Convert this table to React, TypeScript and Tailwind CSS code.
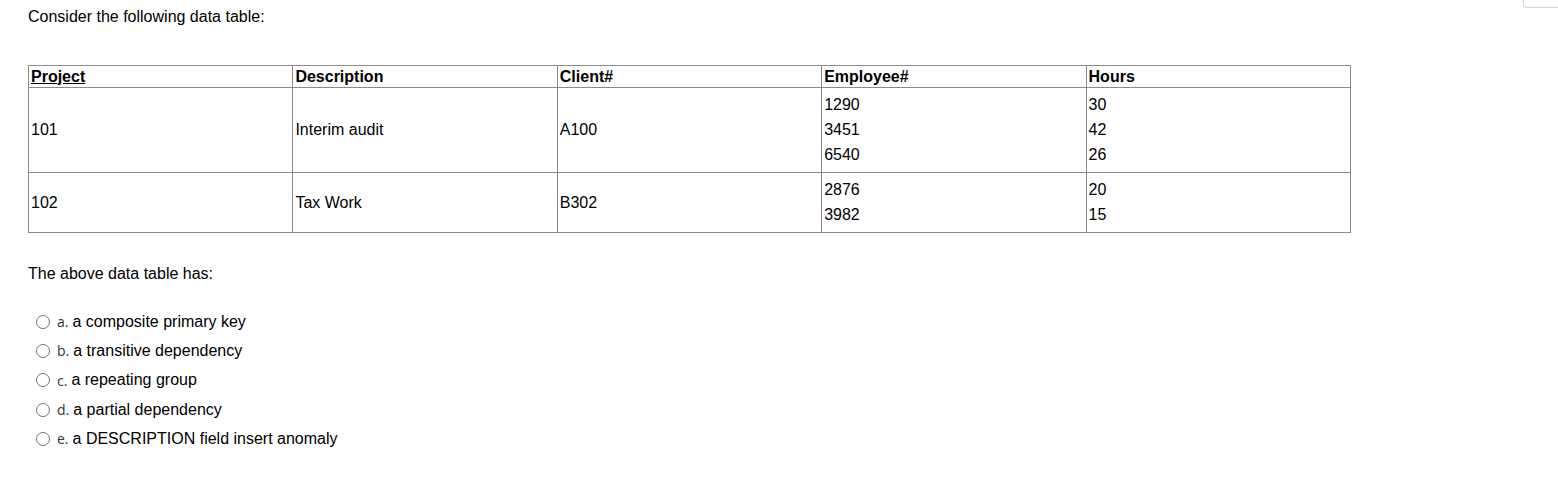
import React from 'react'

const rows = [
    { project: '101', desc: 'Interim audit', client: 'A100', emps: ['1290', '3451', '6540'], hours: ['30', '42', '26'] },
    { project: '102', desc: 'Tax Work', client: 'B302', emps: ['2876', '3982'], hours: ['20', '15'] },
]

const options = [
    { key: 'a.', text: 'a composite primary key' },
    { key: 'b.', text: 'a transitive dependency' },
    { key: 'c.', text: 'a repeating group' },
    { key: 'd.', text: 'a partial dependency' },
    { key: 'e.', text: 'a DESCRIPTION field insert anomaly' },
]

const cell = 'border border-[#8a8a8a] px-[2px] align-middle text-left'

export default function App() {
    return (
        <div className="relative min-h-[481px] bg-white text-black font-['Liberation_Sans',Arial,sans-serif] pl-[28px] pt-[8px]">
            <div className="absolute right-0 top-0 w-[35px] h-[8px] border-l border-b border-[#d4d4d4] rounded-bl-[4px]" />

            <p className="text-[16px] leading-[18px]">Consider the following data table:</p>

            <table className="mt-[39px] w-[1323px] border-collapse table-fixed text-[16px]">
                <thead>
                    <tr className="h-[22px]">
                        <th className={`${cell} font-bold leading-[18px]`}><span className="underline">Project</span></th>
                        <th className={`${cell} font-bold leading-[18px]`}>Description</th>
                        <th className={`${cell} font-bold leading-[18px]`}>Client#</th>
                        <th className={`${cell} font-bold leading-[18px]`}>Employee#</th>
                        <th className={`${cell} font-bold leading-[18px]`}>Hours</th>
                    </tr>
                </thead>
                <tbody>
                    {rows.map(r => (
                        <tr key={r.project}>
                            <td className={`${cell} leading-[18px]`}>{r.project}</td>
                            <td className={`${cell} leading-[18px]`}>{r.desc}</td>
                            <td className={`${cell} leading-[18px]`}>{r.client}</td>
                            <td className={`${cell} pt-[4px] pb-[5px]`}>
                                {r.emps.map(e => <div key={e} className="leading-[25px]">{e}</div>)}
                            </td>
                            <td className={`${cell} pt-[4px] pb-[5px]`}>
                                {r.hours.map((h, i) => <div key={i} className="leading-[25px]">{h}</div>)}
                            </td>
                        </tr>
                    ))}
                </tbody>
            </table>

            <p className="mt-[32px] text-[16px] leading-[18px]">The above data table has:</p>

            <div className="mt-[24px] ml-[8px] flex flex-col">
                {options.map(o => (
                    <label key={o.key} className="flex items-center h-[29.3px] gap-[6px]">
                        <span className="w-[14px] h-[14px] rounded-full border-[1.5px] border-[#707070] bg-white shrink-0" />
                        <span className="flex items-center gap-[4px] text-[16px]">
                            <span className="font-['Open_Sans',sans-serif] text-[14px] text-[#333] pl-[1px]">{o.key}</span>
                            <span>{o.text}</span>
                        </span>
                    </label>
                ))}
            </div>
        </div>
    )
}
